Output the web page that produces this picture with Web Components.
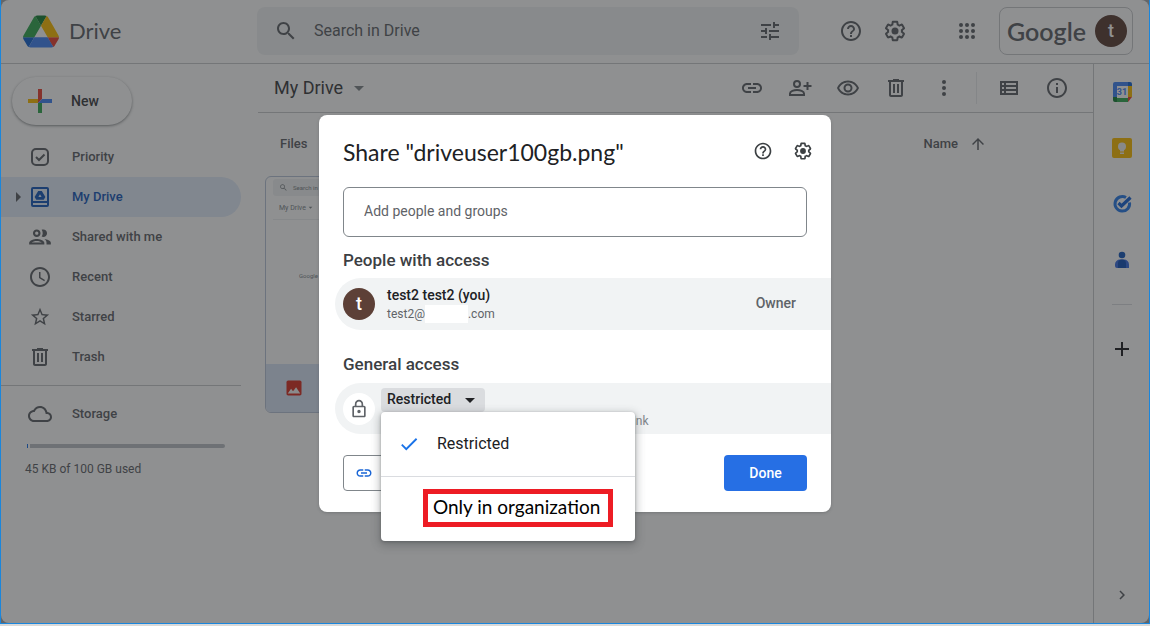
<!DOCTYPE html>
<html lang="en">
<head>
<meta charset="utf-8">
<title>My Drive - Google Drive</title>
<style>
html, body { margin: 0; height: 100%; }
body { font-family: Roboto, "Liberation Sans", sans-serif; font-size: 14px; color: #5f6368; background: #d9d9d9; overflow: hidden; }
</style>
</head>
<body>
<drive-app></drive-app>
<script>
const ICONS = {
  search: '<path d="M15.5 14h-.79l-.28-.27C15.41 12.59 16 11.11 16 9.5 16 5.91 13.09 3 9.5 3S3 5.91 3 9.5 5.91 16 9.5 16c1.61 0 3.09-.59 4.23-1.57l.27.28v.79l5 4.99L20.49 19l-4.99-5zm-6 0C7.01 14 5 11.99 5 9.5S7.01 5 9.5 5 14 7.01 14 9.5 11.99 14 9.5 14z"/>',
  tune: '<path d="M3 17v2h6v-2H3zM3 5v2h10V5H3zm10 16v-2h8v-2h-8v-2h-2v6h2zM7 9v2H3v2h4v2h2V9H7zm14 4v-2H11v2h10zm-6-4h2V7h4V5h-4V3h-2v6z"/>',
  help: '<path d="M11 18h2v-2h-2v2zm1-16C6.48 2 2 6.48 2 12s4.48 10 10 10 10-4.48 10-10S17.52 2 12 2zm0 18c-4.41 0-8-3.59-8-8s3.59-8 8-8 8 3.59 8 8-3.59 8-8 8zm0-14c-2.21 0-4 1.79-4 4h2c0-1.1.9-2 2-2s2 .9 2 2c0 2-3 1.75-3 5h2c0-2.25 3-2.5 3-5 0-2.21-1.79-4-4-4z"/>',
  settings: '<path d="M13.85 22.25h-3.7c-.74 0-1.36-.54-1.45-1.27l-.27-1.89c-.27-.14-.53-.29-.79-.46l-1.8.72c-.7.26-1.47-.03-1.81-.65L2.2 15.53c-.35-.66-.2-1.44.36-1.88l1.53-1.19c-.01-.15-.02-.3-.02-.46 0-.15.01-.31.02-.46l-1.52-1.19c-.59-.45-.74-1.26-.37-1.88l1.85-3.19c.34-.62 1.11-.9 1.79-.63l1.81.73c.26-.17.52-.32.78-.46l.27-1.91c.09-.7.71-1.25 1.44-1.25h3.7c.74 0 1.36.54 1.45 1.27l.27 1.89c.27.14.53.29.79.46l1.8-.72c.71-.26 1.48.03 1.82.65l1.84 3.18c.36.66.2 1.44-.36 1.88l-1.52 1.19c.01.15.02.3.02.46s-.01.31-.02.46l1.52 1.19c.56.45.72 1.23.37 1.86l-1.86 3.22c-.34.62-1.11.9-1.8.63l-1.8-.72c-.26.17-.52.32-.78.46l-.27 1.91c-.1.68-.72 1.22-1.46 1.22zm-3.23-2h2.76l.37-2.55.53-.22c.44-.18.88-.44 1.34-.78l.45-.34 2.38.96 1.38-2.4-2.03-1.58.07-.56c.03-.26.06-.51.06-.78s-.03-.53-.06-.78l-.07-.56 2.03-1.58-1.39-2.4-2.39.96-.45-.35c-.42-.32-.87-.58-1.33-.77l-.52-.22-.37-2.55h-2.76l-.37 2.55-.53.21c-.44.19-.88.44-1.34.79l-.45.33-2.38-.95-1.39 2.39 2.03 1.58-.07.56a7 7 0 0 0-.06.79c0 .26.02.53.06.78l.07.56-2.03 1.58 1.38 2.4 2.39-.96.45.35c.43.33.86.58 1.33.77l.53.22.38 2.55z"/><circle cx="12" cy="12" r="3.5"/>',
  apps: [6, 12, 18].map(y => [6, 12, 18].map(x => `<circle cx="${x}" cy="${y}" r="2"/>`).join('')).join(''),
  link: '<path d="M3.9 12c0-1.71 1.39-3.1 3.1-3.1h4V7H7c-2.76 0-5 2.24-5 5s2.24 5 5 5h4v-1.9H7c-1.71 0-3.1-1.39-3.1-3.1zM8 13h8v-2H8v2zm9-6h-4v1.900h4c1.71 0 3.100 1.390 3.100 3.100s-1.390 3.100-3.100 3.100h-4V17h4c2.76 0 5-2.24 5-5s-2.240-5-5-5z"/>',
  personAdd: '<g fill="none" stroke="currentColor" stroke-width="2"><circle cx="9" cy="8" r="3"/><path d="M2 19v-1.600c0-2.300 4-3.400 7-3.400s7 1.100 7 3.400V19z"/><path d="M19.500 6v8M15.500 10h8"/></g>',
  eye: '<path d="M12 6.500c3.790 0 7.170 2.130 8.820 5.500-1.650 3.370-5.030 5.500-8.820 5.500S4.830 15.370 3.180 12C4.830 8.630 8.210 6.500 12 6.500m0-2C7 4.500 2.730 7.610 1 12c1.730 4.390 6 7.500 11 7.500s9.270-3.110 11-7.500c-1.730-4.390-6-7.500-11-7.500zm0 5a2.500 2.500 0 0 1 0 5 2.500 2.500 0 0 1 0-5m0-2a4.500 4.500 0 1 0 0 9 4.500 4.500 0 0 0 0-9z"/>',
  trash: '<path d="M15 4V3H9v1H4v2h1v13c0 1.100.9 2 2 2h10c1.100 0 2-.9 2-2V6h1V4h-5zm2 15H7V6h10v13zM9 8h2v9H9zm4 0h2v9h-2z"/>',
  more: '<circle cx="12" cy="6" r="2"/><circle cx="12" cy="12" r="2"/><circle cx="12" cy="18" r="2"/>',
  list: '<path fill-rule="evenodd" d="M3 5h18v14H3zM5 7v2h2V7zM9 7v2h10V7zM5 11v2h2v-2zM9 11v2h10v-2zM5 15v2h2v-2zM9 15v2h10v-2z"/>',
  info: '<path d="M11 7h2v2h-2zm0 4h2v6h-2zm1-9C6.480 2 2 6.480 2 12s4.480 10 10 10 10-4.480 10-10S17.520 2 12 2zm0 18c-4.410 0-8-3.590-8-8s3.590-8 8-8 8 3.590 8 8-3.590 8-8 8z"/>',
  arrowUp: '<path d="M4 12l1.410 1.410L11 7.830V20h2V7.830l5.580 5.590L20 12l-8-8-8 8z"/>',
  caret: '<path d="M7 10l5 5 5-5z"/>',
  caretRight: '<path d="M10 7l5 5-5 5z"/>',
  check: '<path d="M9 16.170L4.830 12l-1.420 1.410L9 19 21 7l-1.410-1.410z"/>',
  chevron: '<path d="M10 6L8.590 7.410 13.170 12l-4.580 4.590L10 18l6-6z"/>',
  plus: '<path d="M11 5h2v6h6v2h-6v6h-2v-6H5v-2h6z"/>',
  priority: '<rect x="4" y="4" width="16" height="16" rx="4" fill="none" stroke="currentColor" stroke-width="2"/><path d="M8 12l3 3 5.500-5.500" fill="none" stroke="currentColor" stroke-width="2"/>',
  myDrive: '<path fill-rule="evenodd" d="M5 2h14a2 2 0 0 1 2 2v16a2 2 0 0 1-2 2H5a2 2 0 0 1-2-2V4a2 2 0 0 1 2-2zm0 2v12h14V4zm0 14v2h14v-2z"/><path fill-rule="evenodd" d="M10.200 6h3.600l3.600 6-1.700 2.800H8.300L6.600 12zm1.800 3.300L10.400 12h3.200z"/>',
  people: '<path d="M9 13.750c-2.340 0-7 1.170-7 3.500V19h14v-1.750c0-2.330-4.660-3.500-7-3.500zM4.340 17c.84-.58 2.870-1.250 4.660-1.250s3.820.67 4.660 1.250H4.340zM9 12c1.930 0 3.500-1.570 3.500-3.500S10.930 5 9 5 5.500 6.570 5.500 8.500 7.070 12 9 12zm0-5c.83 0 1.500.67 1.500 1.500S9.830 10 9 10s-1.500-.67-1.500-1.500S8.170 7 9 7zm7.040 6.810c1.160.84 1.960 1.960 1.960 3.440V19h4v-1.750c0-2.020-3.500-3.170-5.960-3.440zM15 12c1.930 0 3.500-1.570 3.500-3.500S16.930 5 15 5c-.54 0-1.040.13-1.500.35.63.89 1 1.980 1 3.150s-.37 2.260-1 3.150c.46.22.96.35 1.500.35z"/>',
  clock: '<path d="M11.990 2C6.470 2 2 6.480 2 12s4.470 10 9.990 10C17.520 22 22 17.520 22 12S17.520 2 11.990 2zM12 20c-4.420 0-8-3.580-8-8s3.580-8 8-8 8 3.580 8 8-3.580 8-8 8zM12.500 7H11v6l5.250 3.150.75-1.230-4.500-2.670z"/>',
  star: '<path d="M22 9.240l-7.190-.62L12 2 9.190 8.630 2 9.240l5.460 4.730L5.820 21 12 17.270 18.180 21l-1.630-7.030L22 9.240zM12 15.400l-3.760 2.270 1-4.280-3.320-2.880 4.380-.38L12 6.100l1.710 4.040 4.380.38-3.320 2.880 1 4.280L12 15.400z"/>',
  cloud: '<path d="M19.350 10.040C18.670 6.590 15.640 4 12 4 9.110 4 6.600 5.640 5.350 8.040 2.340 8.360 0 10.910 0 14c0 3.310 2.690 6 6 6h13c2.760 0 5-2.240 5-5 0-2.640-2.050-4.780-4.650-4.960zM19 18H6c-2.210 0-4-1.790-4-4 0-2.050 1.530-3.760 3.560-3.970l1.070-.11.5-.95C8.080 7.140 9.940 6 12 6c2.620 0 4.880 1.860 5.390 4.430l.3 1.500 1.530.11c1.560.1 2.780 1.410 2.780 2.960 0 1.650-1.350 3-3 3z"/>',
  lock: '<path d="M18 8h-1V6c0-2.760-2.240-5-5-5S7 3.240 7 6v2H6c-1.100 0-2 .9-2 2v10c0 1.100.9 2 2 2h12c1.100 0 2-.9 2-2V10c0-1.100-.9-2-2-2zM9 6c0-1.660 1.340-3 3-3s3 1.340 3 3v2H9V6zm9 14H6V10h12v10zm-6-3c1.100 0 2-.9 2-2s-.9-2-2-2-2 .9-2 2 .9 2 2 2z"/>',
  image: '<path fill="#d93025" d="M21 19V5c0-1.100-.9-2-2-2H5c-1.100 0-2 .9-2 2v14c0 1.100.9 2 2 2h14c1.100 0 2-.9 2-2z"/><path fill="#f4f4f4" d="M4.500 18.500l4-5.500 2.300 3 1-1.300L14.500 11l5 7.500z"/>',
  newPlus: '<path fill="#ea4335" d="M10 0h4v10l-4 4z"/><path fill="#fbbc04" d="M0 10h10v4H0z"/><path fill="#4285f4" d="M14 10h10v4H10z"/><path fill="#34a853" d="M10 14h4v10h-4z"/>',
  calendar: '<path fill="#4285f4" d="M3 4a2 2 0 0 1 2-2h13v4H7v11H3z"/><path fill="#1967d2" d="M18 2h2a2 2 0 0 1 2 2v2h-4z"/><path fill="#fbbc04" d="M18 6h4v11h-4z"/><path fill="#34a853" d="M7 18h11v4H7z"/><path fill="#188038" d="M3 17h4v5H5a2 2 0 0 1-2-2z"/><path fill="#ea4335" d="M18 17h4l-4 5z"/><path fill="#fff" d="M7 6h11v12H7z"/><text x="12" y="15" text-anchor="middle" font-family="Roboto, sans-serif" font-weight="700" font-size="9" fill="#4285f4">31</text>',
  keep: '<rect x="2" y="2" width="20" height="20" rx="2" fill="#fbbc04"/><circle cx="12" cy="10.500" r="4" fill="#f1f1f1"/><path fill="#f1f1f1" d="M10 13h4v2.500h-4zM10 16.500h4V18h-4z"/>',
  tasks: '<path d="M19.500 10.500a7.300 7.300 0 1 1-3.500-5" fill="none" stroke="#2b7de9" stroke-width="3"/><path d="M8.500 11l3 3L20.500 5.500" fill="none" stroke="#1a66d6" stroke-width="3.200"/>',
  contact: '<circle cx="12" cy="7" r="3.300" fill="#185abc"/><path fill="#3b6fe0" d="M5 16.500a5 5 0 0 1 5-5h4a5 5 0 0 1 5 5V20H7a2 2 0 0 1-2-2z"/><path fill="#1552b8" d="M8 15.500a4 4 0 0 1 8 0V20H8z"/>'
};

/* Shared base: each element renders its static template into an open root. */
class BaseElement extends HTMLElement {
  constructor() {
    super();
    this.attachShadow({ mode: 'open' });
  }
  connectedCallback() {
    const t = document.createElement('template');
    t.innerHTML = `<style>*{box-sizing:border-box}button{font:inherit;color:inherit;background:none;border:0;padding:0;margin:0;cursor:pointer}a{color:inherit;text-decoration:none}</style>${this.render()}`;
    this.shadowRoot.replaceChildren(t.content.cloneNode(true));
  }
}
const define = (name, render) => customElements.define(name, class extends BaseElement {
  render() { return render(this); }
});

define('ui-icon', el => `
<style>:host{display:block;flex:none;width:${el.getAttribute('size') || 24}px;height:${el.getAttribute('size') || 24}px}svg{display:block;width:100%;height:100%}</style>
<svg viewBox="0 0 24 24" fill="currentColor" aria-hidden="true">${ICONS[el.getAttribute('name')]}</svg>`);

define('icon-button', el => `
<style>:host{display:block;flex:none}button{display:grid;place-items:center;width:100%;height:100%}</style>
<button type="button" aria-label="${el.getAttribute('label')}"><ui-icon name="${el.getAttribute('icon')}" size="${el.getAttribute('size') || 24}"></ui-icon></button>`);

define('user-avatar', () => `
<style>:host{display:grid;place-items:center;flex:none;width:32px;height:32px;border-radius:50%;background:#5d4037;color:#fff;font-size:18px;font-weight:500;line-height:32px}</style>
<span><slot></slot></span>`);

define('drive-header', () => `
<style>
:host{display:flex;align-items:center;height:64px;border-bottom:1px solid #c8cacd;padding:0 16px 1px 0}
.brand{display:flex;align-items:center;gap:10px;width:256px;flex:none;padding-left:22px;font-family:Lato,sans-serif;font-size:22px;line-height:32px}
.brand svg{width:36px;height:33px}
form{flex:1;display:flex;align-items:center;height:48px;margin:0;padding:0 17px;background:#f1f3f4;border-radius:8px;min-width:0}
input{flex:1;min-width:0;border:0;outline:0;background:none;padding:0;margin-left:16px;font-family:Roboto,sans-serif;font-size:16px;line-height:24px}
input::placeholder{color:#5f6368;opacity:1}
form icon-button{width:24px;height:24px}
.tools{display:flex;gap:20px;margin-left:40px}
.tools icon-button{width:24px;height:24px}
.tools .apps{margin-left:28px}
.account{display:flex;align-items:center;justify-content:space-between;width:134px;height:48px;margin-left:20px;padding:0 5px 0 7px;border:1px solid #c8cacd;border-radius:8px}
.word{font-family:Lato,sans-serif;font-size:25px;line-height:32px;font-weight:600}
</style>
<a class="brand" href="#"><svg viewBox="0 0 87.3 78" aria-hidden="true">
<path d="m6.6 66.85 3.85 6.65c.8 1.4 1.95 2.5 3.3 3.3l13.75-23.800h-27.500c0 1.550.4 3.100 1.200 4.500z" fill="#1967d2"/>
<path d="m43.65 25-13.750-23.800c-1.350.8-2.500 1.900-3.300 3.300l-25.400 44a9.060 9.060 0 0 0 -1.200 4.500h27.500z" fill="#34a853"/>
<path d="m73.55 76.800c1.350-.8 2.500-1.900 3.300-3.300l1.600-2.750 7.650-13.250c.8-1.400 1.200-2.950 1.200-4.500h-27.502l5.852 11.500z" fill="#ea4335"/>
<path d="m43.65 25 13.750-23.800c-1.350-.8-2.900-1.200-4.500-1.200h-18.500c-1.600 0-3.150.45-4.500 1.200z" fill="#188038"/>
<path d="m59.8 53h-32.300l-13.750 23.800c1.350.8 2.900 1.200 4.500 1.200h50.800c1.600 0 3.150-.45 4.500-1.200z" fill="#4285f4"/>
<path d="m73.4 26.500-12.700-22c-.8-1.400-1.950-2.500-3.300-3.300l-13.750 23.800 16.150 28h27.450c0-1.550-.4-3.100-1.200-4.500z" fill="#fbbc04"/></svg><span>Drive</span></a>
<form role="search"><icon-button icon="search" label="Search"></icon-button><input type="text" aria-label="Search in Drive" placeholder="Search in Drive"><icon-button icon="tune" label="Search options"></icon-button></form>
<div class="tools"><icon-button icon="help" label="Support"></icon-button><icon-button icon="settings" label="Settings"></icon-button><icon-button class="apps" icon="apps" label="Google apps"></icon-button></div>
<a class="account" href="#"><span class="word">Google</span><user-avatar>t</user-avatar></a>`);

define('nav-item', el => `
<style>
:host{display:block}
a{display:grid;grid-template-columns:27px 24px 1fr;align-items:center;justify-items:center;height:40px;font-size:13px;font-weight:500;line-height:20px;border-radius:0 20px 20px 0}
.open{padding-left:6px}
.label{justify-self:start;padding-left:20px}
:host([selected]) a{background:#e2ecfb;color:#185abc}
.open ui-icon{color:#5f6368}
</style>
<a href="#"><span class="open">${el.hasAttribute('selected') ? '<ui-icon name="caretRight" size="24"></ui-icon>' : ''}</span><ui-icon name="${el.getAttribute('icon')}" size="${el.getAttribute('size') || 24}"></ui-icon><span class="label"><slot></slot></span></a>`);

define('drive-sidebar', () => `
<style>
:host{display:block;width:240px;flex:none;padding-top:13px}
.new{display:flex;align-items:center;gap:19px;width:120px;height:48px;margin-left:11px;padding-left:16px;border-radius:24px;background:#fff;color:#3c4043;font-size:14px;font-weight:500;line-height:20px;box-shadow:0 1px 2px rgba(60,64,67,.4),0 1px 3px 1px rgba(60,64,67,.15)}
nav{margin-top:12px}
hr{border:0;border-top:1px solid #c8cacd;margin:8px 0}
.meter{display:flex;gap:2px;height:4px;margin:10px 16px 0 26px}
.used{width:1px;background:#1a73e8}
.free{flex:1;border-radius:0 2px 2px 0;background:#bdc1c6}
p{margin:11px 0 0 24px;font-size:12px;line-height:20px}
</style>
<button class="new" type="button"><ui-icon name="newPlus"></ui-icon>New</button>
<nav>
<nav-item icon="priority">Priority</nav-item>
<nav-item icon="myDrive" selected>My Drive</nav-item>
<nav-item icon="people" size="26">Shared with me</nav-item>
<nav-item icon="clock">Recent</nav-item>
<nav-item icon="star" size="22">Starred</nav-item>
<nav-item icon="trash">Trash</nav-item>
<hr>
<nav-item icon="cloud">Storage</nav-item>
</nav>
<div class="meter" role="img" aria-label="Storage meter"><span class="used"></span><span class="free"></span></div>
<p>45 KB of 100 GB used</p>`);

define('drive-toolbar', () => `
<style>
:host{display:flex;align-items:center;height:49px;border-bottom:1px solid #c8cacd;padding-left:16px;padding-right:12px}
.path{display:flex;align-items:center;font-size:18px;line-height:24px;color:#3c4043}
.path ui-icon{margin-left:4px;color:#80868b}
.actions{display:flex;align-items:center;margin-left:auto}
icon-button{width:48px;height:48px}
.rule{width:1px;height:32px;margin:0 8px;background:#e8eaed}
</style>
<button class="path" type="button">My Drive<ui-icon name="caret"></ui-icon></button>
<div class="actions">
<icon-button icon="link" label="Get link"></icon-button><icon-button icon="personAdd" label="Share"></icon-button><icon-button icon="eye" label="Preview"></icon-button><icon-button icon="trash" label="Remove"></icon-button><icon-button icon="more" label="More actions"></icon-button>
<span class="rule"></span>
<icon-button icon="list" label="List layout"></icon-button><icon-button icon="info" label="View details"></icon-button>
</div>`);

define('file-card', () => `
<style>
:host{display:block;width:210px;border:1px solid #b8c4d8;border-radius:6px;overflow:hidden}
.preview{height:187px;padding:2px 0 0 7px;font-size:6px;line-height:10px;color:#80868b}
.find{display:flex;align-items:center;gap:5px;height:17px;padding-left:6px;background:#f1f3f4;border-radius:3px}
.loc{display:flex;align-items:center;margin:0;height:24px;padding-left:6px;border-bottom:1px solid #eceef0;font-size:7px}
.msg{margin:51px 0 0 26px}
.foot{display:flex;align-items:center;height:48px;padding-left:18px;background:#d9e4f6}
</style>
<div class="preview"><div class="find"><ui-icon name="search" size="9"></ui-icon>Search in Drive</div><p class="loc">My Drive<ui-icon name="caret" size="9"></ui-icon></p><p class="msg">Google Drive</p></div>
<div class="foot"><ui-icon name="image" size="20"></ui-icon></div>`);

define('drive-files', () => `
<style>
:host{display:block;flex:1;min-width:0;margin-left:17px}
.heads{display:flex;justify-content:space-between;align-items:center;height:63px;padding:0 106px 2px 22px;font-size:13px;font-weight:500;line-height:20px}
.sort{display:flex;align-items:center;gap:11px}
file-card{margin-left:7px}
</style>
<drive-toolbar></drive-toolbar>
<div class="heads"><span>Files</span><button class="sort" type="button">Name<ui-icon name="arrowUp" size="18"></ui-icon></button></div>
<file-card></file-card>`);

define('side-panel', () => `
<style>
:host{display:flex;flex-direction:column;align-items:center;width:56px;flex:none;border-left:1px solid #c8cacd;padding-bottom:8px}
icon-button{width:40px;height:56px}
hr{width:20px;border:0;border-top:1px solid #dadce0;margin:16px 0}
.add{color:#202124}
.hide{margin-top:auto;height:40px}
</style>
<icon-button icon="calendar" label="Calendar"></icon-button><icon-button icon="keep" label="Keep"></icon-button><icon-button icon="tasks" label="Tasks"></icon-button><icon-button icon="contact" label="Contacts"></icon-button>
<hr>
<icon-button class="add" icon="plus" label="Get add-ons"></icon-button>
<icon-button class="hide" icon="chevron" size="18" label="Hide side panel"></icon-button>`);

define('access-row', () => `
<style>
:host{display:flex;align-items:center;gap:12px;height:52px;margin:0 0 0 16px;padding:0 35px 0 8px;background:#f1f3f4;border-radius:26px 0 0 26px}
.body{flex:1;min-width:0}
.end{padding-bottom:2px;font-weight:500;line-height:20px}
</style>
<slot name="lead"></slot><div class="body"><slot></slot></div><div class="end"><slot name="end"></slot></div>`);

define('access-menu', () => `
<style>
:host{display:block;width:254px;background:#fff;border-radius:4px;box-shadow:0 1px 3px rgba(60,64,67,.4),0 3px 8px 2px rgba(60,64,67,.3)}
button{display:flex;align-items:center;width:100%;height:64px;color:#202124;text-align:left}
.on{padding-left:17px;gap:17px;font-size:16px;line-height:24px}
.on ui-icon{color:#1a73e8}
.other{height:65px;padding:0 0 2px 42px;border-top:1px solid #dadce0}
.mark{flex:none;width:190px;height:38px;padding-left:5px;border:5px solid #ed1c24;font-family:Lato,sans-serif;font-size:19px;line-height:26px;color:#000;white-space:nowrap}
</style>
<div role="listbox" aria-label="General access options">
<button class="on" type="button" role="option" aria-selected="true"><ui-icon name="check" size="22"></ui-icon>Restricted</button>
<button class="other" type="button" role="option" aria-selected="false"><span class="mark">Only in organization</span></button>
</div>`);

define('share-dialog', () => `
<style>
:host{display:block;width:512px;background:#fff;border-radius:8px;padding:20px 0 21px;color:#5f6368;box-shadow:0 1px 3px rgba(60,64,67,.3)}
header{display:flex;align-items:center;gap:20px;height:32px;padding:0 18px 0 24px}
h1{flex:1;margin:0;padding-top:2px;font-family:Lato,sans-serif;font-weight:400;font-size:23px;line-height:28px;color:#202124}
header icon-button{width:20px;height:32px;color:#3c4043}
input{display:block;width:calc(100% - 48px);height:50px;margin:20px 24px 0;padding:0 20px 2px;border:1px solid #80868b;border-radius:6px;font-family:Roboto,sans-serif;font-size:14px}
input::placeholder{color:#5f6368;opacity:1}
h2{margin:11px 24px 6px;font-size:17px;font-weight:500;line-height:24px;color:#3c4043}
h2.general{margin-top:22px;margin-bottom:7px}
.name{margin:0;font-weight:500;line-height:20px;color:#202124}
.mail{display:flex;align-items:center;margin:0;font-size:12px;line-height:18px}
.blank{width:43px;height:18px;background:#fff}
.shared{height:51px}
.lock{display:grid;place-items:center;flex:none;width:32px;height:32px;border-radius:50%;background:#fff}
.picker{position:relative;width:104px;margin-left:-6px}
select{display:block;width:104px;height:24px;border:0;border-radius:4px;padding:0 6px 2px;appearance:none;background:#dadcdf;font-family:Roboto,sans-serif;font-size:14px;font-weight:500;line-height:20px;color:#202124}
.picker ui-icon{position:absolute;right:3px;top:0;color:#202124;pointer-events:none}
access-menu{position:absolute;left:0;top:24px;z-index:1}
.note{margin:0;padding-left:14px;font-size:12px;line-height:18px;white-space:nowrap;color:#80868b}
footer{display:flex;justify-content:space-between;margin:21px 24px 0}
footer button{height:36px;border-radius:4px;font-weight:500;line-height:20px}
.copy{display:flex;align-items:center;gap:8px;padding:0 16px 0 11px;border:1px solid #80868b;color:#1a66d6}
.done{min-width:83px;padding:0 24px;background:#266fe4;color:#fff}
</style>
<header><h1>Share "driveuser100gb.png"</h1><icon-button icon="help" size="20" label="Help"></icon-button><icon-button icon="settings" size="20" label="Settings"></icon-button></header>
<input type="text" aria-label="Add people and groups" placeholder="Add people and groups">
<h2>People with access</h2>
<access-row><user-avatar slot="lead">t</user-avatar><p class="name">test2 test2 (you)</p><p class="mail">test2@<span class="blank"></span>.com</p><span slot="end">Owner</span></access-row>
<h2 class="general">General access</h2>
<access-row class="shared"><span class="lock" slot="lead"><ui-icon name="lock" size="20"></ui-icon></span>
<div class="picker"><select aria-label="General access"><option>Restricted</option><option>Only in organization</option></select><ui-icon name="caret"></ui-icon><access-menu></access-menu></div>
<p class="note">Only people with access can open with the link</p></access-row>
<footer><button class="copy" type="button"><ui-icon name="link" size="18"></ui-icon>Copy link</button><button class="done" type="button">Done</button></footer>`);

define('drive-app', () => `
<style>
:host{display:flex;flex-direction:column;position:relative;box-sizing:border-box;height:calc(100% - 2px);background:#a8abae;border:solid #1a86dc;border-width:0 1px 1px}
drive-header{background:#fff;border-radius:8px 8px 0 0}
main{display:flex;flex:1;min-height:0;background:#fff;border-radius:0 0 8px 8px}
.scrim{position:absolute;inset:0;display:grid;place-items:center;padding-top:4px;background:rgba(32,33,36,.5)}
</style>
<drive-header></drive-header>
<main><drive-sidebar></drive-sidebar><drive-files></drive-files><side-panel></side-panel></main>
<div class="scrim"><share-dialog role="dialog" aria-modal="true" aria-label="Share"></share-dialog></div>`);
</script>
</body>
</html>
